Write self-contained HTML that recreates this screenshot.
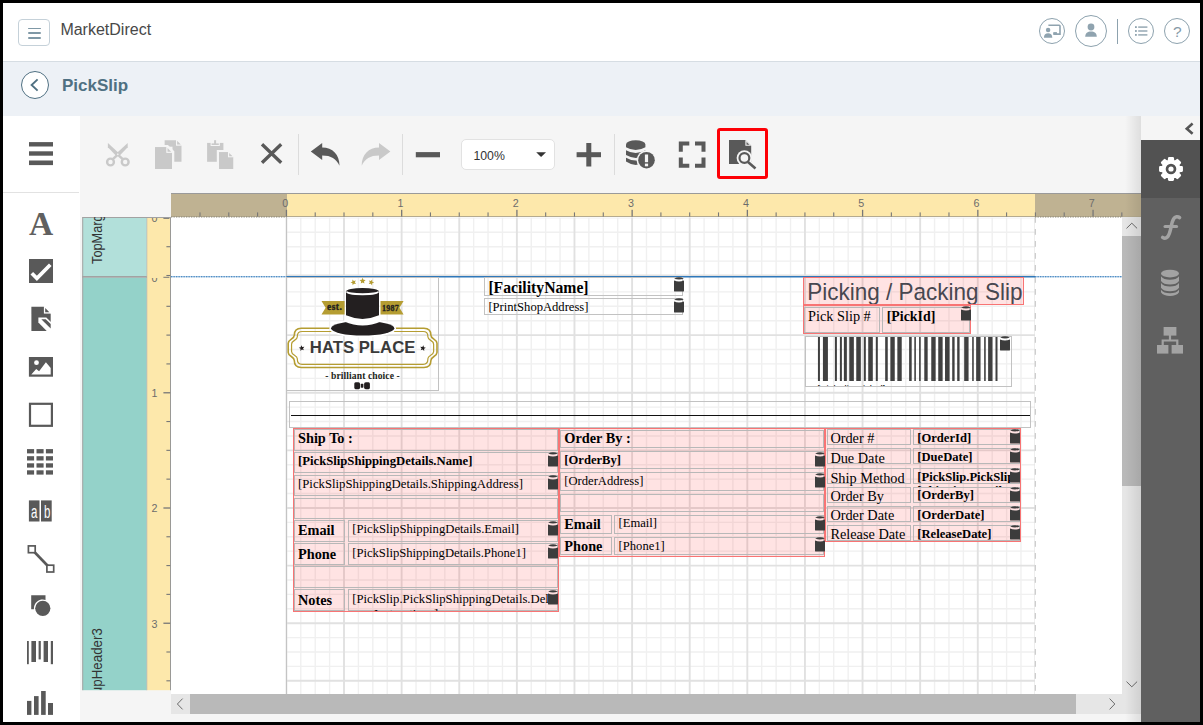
<!DOCTYPE html>
<html lang="en"><head><meta charset="utf-8"><title>PickSlip - MarketDirect</title>
<style>
html,body{margin:0;padding:0}
body{width:1203px;height:725px;background:#000;position:relative;overflow:hidden;font-family:"Liberation Sans",sans-serif;color:#333}
.a{position:absolute}
.sans{font-family:"Liberation Sans",sans-serif}
.serif{font-family:"Liberation Serif",serif;color:#000}
.t{position:absolute;white-space:nowrap;line-height:1}
svg{position:absolute;overflow:visible}
.cell{position:absolute;box-sizing:border-box;border:1px solid #b8b8b8;overflow:hidden}
.tbl{position:absolute;box-sizing:border-box;border:1.300px solid #f87474;background:rgba(255,40,40,0.130)}
.rn{position:absolute;font-size:10.700px;color:#6c6c6c;line-height:1;white-space:nowrap}
</style></head>
<body>
<div class="a" style="left:3px;top:3px;width:1197px;height:719px;background:#f5f5f5;"></div>
<div class="a" style="left:3px;top:3px;width:1197px;height:58px;background:#fff;"></div>
<div class="a" style="left:3px;top:61px;width:1197px;height:1px;background:#d6dde3;"></div>
<div class="a" style="left:3px;top:62px;width:1197px;height:54px;background:#edf1f6;"></div>
<div class="a" style="left:18px;top:19px;width:32px;height:27px;box-sizing:border-box;border:1px solid #c5d1d9;border-radius:4px;background:#fff"></div>
<div class="a" style="left:27.8px;top:27.8px;width:13px;height:1.6px;background:#7f98a6;border-radius:1px"></div>
<div class="a" style="left:27.8px;top:32.4px;width:13px;height:1.6px;background:#7f98a6;border-radius:1px"></div>
<div class="a" style="left:27.8px;top:37.2px;width:13px;height:1.6px;background:#7f98a6;border-radius:1px"></div>
<div class="t sans" style="left:60.4px;top:21.66px;font-size:16px;font-weight:normal;color:#484848;">MarketDirect</div>
<div class="a" style="left:1039px;top:18px;width:26px;height:26px;box-sizing:border-box;border:1.1px solid #8da2ae;border-radius:50%;background:#fff"></div>
<div class="a" style="left:1075px;top:15px;width:32px;height:32px;box-sizing:border-box;border:1.1px solid #8da2ae;border-radius:50%;background:#fff"></div>
<div class="a" style="left:1128px;top:18px;width:26px;height:26px;box-sizing:border-box;border:1.1px solid #8da2ae;border-radius:50%;background:#fff"></div>
<div class="a" style="left:1164px;top:18px;width:26px;height:26px;box-sizing:border-box;border:1.1px solid #8da2ae;border-radius:50%;background:#fff"></div>
<div class="a" style="left:1117px;top:18.5px;width:1.2px;height:25px;background:#8da2ae;"></div>
<svg style="left:1039px;top:18px" width="26" height="26" viewBox="0 0 26 26">
<path d="M9.400 7.300H20.200Q21 7.300 21 8.100V16.100H14.300" fill="none" stroke="#8fa3af" stroke-width="1.600"/>
<circle cx="9.100" cy="12.100" r="2.250" fill="#8fa3af"/>
<path d="M4.900 19.800c0-3.100 1.800-4.500 4.200-4.500s4.200 1.400 4.200 4.500z" fill="#8fa3af"/>
<rect x="14.300" y="14.100" width="3.600" height="2" fill="#8fa3af"/>
</svg>
<svg style="left:1075px;top:15px" width="32" height="32" viewBox="0 0 32 32">
<circle cx="16" cy="12" r="3.4" fill="#8fa3af"/>
<path d="M10.2 21.8c0-3.6 2.4-5.4 5.8-5.4s5.8 1.8 5.8 5.4z" fill="#8fa3af"/>
</svg>
<svg style="left:1128px;top:18px" width="26" height="26" viewBox="0 0 26 26" fill="#8fa3af">
<rect x="7" y="8.2" width="1.8" height="1.8"/><rect x="10.2" y="8.4" width="9.2" height="1.4"/>
<rect x="7" y="12.1" width="1.8" height="1.8"/><rect x="10.2" y="12.3" width="9.2" height="1.4"/>
<rect x="7" y="16" width="1.8" height="1.8"/><rect x="10.2" y="16.2" width="9.2" height="1.4"/>
</svg>
<div class="t sans" style="left:1172.9px;top:23.68px;font-size:15.5px;font-weight:normal;color:#8499a6;">?</div>
<div class="a" style="left:21px;top:70.5px;width:28px;height:28px;box-sizing:border-box;border:1.3px solid #4f7082;border-radius:50%;background:#fff"></div>
<svg style="left:21px;top:70.5px" width="28" height="28" viewBox="0 0 28 28"><path d="M16.6 8.4 10.6 14l6 5.6" fill="none" stroke="#4f7082" stroke-width="1.9"/></svg>
<div class="t sans" style="left:62px;top:77.01px;font-size:17px;font-weight:bold;color:#4f7082;">PickSlip</div>
<div class="a" style="left:3px;top:116px;width:76.7px;height:606px;background:#fff;"></div>
<div class="a" style="left:3px;top:191.9px;width:76.2px;height:1.3px;background:#e2e2e2;"></div>
<svg style="left:0;top:0" width="90" height="725" viewBox="0 0 90 725" fill="#595959">
<rect x="29" y="142.1" width="24" height="4.4"/><rect x="29" y="151.3" width="24" height="4.4"/><rect x="29" y="160.5" width="24" height="4.6"/>
<!-- checkbox -->
<rect x="29" y="259" width="24" height="24"/>
<path d="M31.800 273.200 36.900 278.400 50.300 264.800" fill="none" stroke="#fff" stroke-width="3.700"/>
<!-- rich text -->
<path d="M31.400 306.800H44.200L50.700 313.400V330.900H31.400z"/>
<path d="M43.900 306.300h7.300v7.300h-7.300z" fill="#fff"/><path d="M45.200 308.100v4.200h4.200z"/>
<path d="M38.400 317.500H46.300L51.200 322.300V331.400H47.200L38.400 322.600z" fill="#fff"/>
<path d="M41.300 319.200H45.700L50.700 324.100V328.600z"/>
<!-- picture -->
<rect x="28.900" y="357" width="24.100" height="19.700"/>
<circle cx="36.500" cy="362.700" r="2.400" fill="#fff"/>
<path d="M31.300 374.500 36.200 368.900 39.100 371.200 45.900 362.300 50.700 368.100V374.500z" fill="#fff"/>
<!-- rectangle -->
<rect x="30" y="403.800" width="21.900" height="22" fill="none" stroke="#595959" stroke-width="2.200"/>
<!-- line -->
<path d="M32 549.5 50.3 568.5" stroke="#595959" stroke-width="2.6" fill="none"/>
<rect x="28.4" y="545.9" width="6.8" height="6.8" fill="#fff" stroke="#595959" stroke-width="1.7"/>
<rect x="46.9" y="565.2" width="6.8" height="6.8" fill="#fff" stroke="#595959" stroke-width="1.7"/>
<!-- shape -->
<path d="M31.2 595.3h14.3v4.6a8.9 8.9 0 0 0-11.6 9.3h-2.7z"/>
<circle cx="42.8" cy="608.3" r="7.6"/>
<rect x="27.0" y="449.1" width="7.100" height="4.300"/><rect x="36.5" y="449.1" width="7.100" height="4.300"/><rect x="45.9" y="449.1" width="7.100" height="4.300"/><rect x="27.0" y="456.2" width="7.100" height="4.300"/><rect x="36.5" y="456.2" width="7.100" height="4.300"/><rect x="45.9" y="456.2" width="7.100" height="4.300"/><rect x="27.0" y="463.3" width="7.100" height="4.300"/><rect x="36.5" y="463.3" width="7.100" height="4.300"/><rect x="45.9" y="463.3" width="7.100" height="4.300"/><rect x="27.0" y="470.3" width="7.100" height="4.300"/><rect x="36.5" y="470.3" width="7.100" height="4.300"/><rect x="45.9" y="470.3" width="7.100" height="4.300"/>
<!-- ab -->
<rect x="28.900" y="500.400" width="10.600" height="21.100"/><rect x="41" y="500.400" width="10.700" height="21.100"/>
<rect x="27" y="641" width="1.80" height="23.20"/><rect x="31.4" y="641" width="4.60" height="21.00"/><rect x="38.6" y="641" width="2.20" height="18.40"/><rect x="43.6" y="641" width="4.40" height="21.00"/><rect x="50.8" y="641" width="2.20" height="23.20"/><rect x="27" y="700.9" width="4.40" height="14.00"/><rect x="34" y="696.1" width="4.60" height="18.80"/><rect x="41.1" y="691" width="4.60" height="23.90"/><rect x="48" y="703" width="5.00" height="11.90"/></svg>
<div class="t serif" style="left:28.9px;top:206.74px;font-size:33.5px;font-weight:bold;color:#606060;">A</div>
<div class="t sans" style="left:31.2px;top:502.76px;font-size:18px;font-weight:normal;color:#fff;transform-origin:0 0;transform:scaleX(0.640);">a</div>
<div class="t sans" style="left:43.6px;top:502.76px;font-size:18px;font-weight:normal;color:#fff;transform-origin:0 0;transform:scaleX(0.640);">b</div>
<svg style="left:0;top:0" width="1203" height="200" viewBox="0 0 1203 200">
<!-- scissors -->
<g fill="none" stroke="#c9c9c9" stroke-width="2.400"><circle cx="110.500" cy="162" r="3.400"/><circle cx="125.200" cy="162" r="3.400"/></g>
<path d="M107.900 143.100V147.200L116.300 155.900 119.300 153.400Z" fill="#c9c9c9"/>
<path d="M127.700 143.100V147.200L119.300 155.900 116.300 153.400Z" fill="#c9c9c9"/>
<path d="M117.800 154.600 123 159.400M117.800 154.600 112.600 159.400" stroke="#c9c9c9" stroke-width="2.500" fill="none"/>
<path d="M117.800 153.300l1 1-1 1-1-1z" fill="#f5f5f5"/>
<!-- copy -->
<path d="M164.600 140.200h11.900l5 5V161.800h-16.900z" fill="#c9c9c9"/>
<path d="M176 139.700h6v6h-6z" fill="#f5f5f5"/><path d="M177.100 140.800v3.700h3.700z" fill="#c9c9c9" transform="translate(0,0)"/>
<path d="M155 147.200h12l5 5V169h-17z" fill="#c9c9c9" stroke="#f5f5f5" stroke-width="4.600" paint-order="stroke"/>
<path d="M155 147.200h12l5 5V169h-17z" fill="#c9c9c9"/>
<path d="M166.300 146.700h6.200v6.200h-6.200z" fill="#f5f5f5"/><path d="M167.500 148v3.700h3.700z" fill="#c9c9c9"/>
<!-- paste -->
<path d="M207.100 142.900h16.300v18.900h-16.300z" fill="#c9c9c9"/>
<rect x="210.600" y="139.700" width="9.200" height="6.300" fill="#f5f5f5"/>
<rect x="214.100" y="140.200" width="2" height="4.400" fill="#c9c9c9"/><rect x="211.600" y="143.400" width="7.200" height="1.600" fill="#c9c9c9"/>
<path d="M219 152.200h9.700l4.400 4.400V169h-14.100z" fill="#c9c9c9" stroke="#f5f5f5" stroke-width="4.400" paint-order="stroke"/>
<path d="M219 152.200h9.700l4.400 4.400V169h-14.100z" fill="#c9c9c9"/>
<path d="M228 151.700h5.600v5.600h-5.600z" fill="#f5f5f5"/><path d="M229.200 152.900v3.300h3.300z" fill="#c9c9c9"/>
<!-- delete X -->
<path d="M262 144.2 281.2 162.8M281.2 144.2 262 162.8" stroke="#595959" stroke-width="3.3" fill="none"/>
<!-- separators -->
<rect x="298" y="134" width="1" height="41" fill="#dcdcdc"/><rect x="402" y="134" width="1" height="41" fill="#dcdcdc"/><rect x="614" y="134" width="1" height="41" fill="#dcdcdc"/>
<!-- undo / redo -->
<path d="M310.8 151.6 322.2 143v4.6c10.4 0 17.3 7 17.3 18.2-3.300-7-8.400-10.200-17.300-10.200v4.300z" fill="#595959"/>
<path d="M390.4 151.6 379 143v4.6c-10.400 0-17.300 7-17.300 18.200 3.300-7 8.400-10.200 17.300-10.200v4.300z" fill="#c9c9c9"/>
<!-- minus / plus -->
<rect x="415.8" y="152.1" width="24.2" height="5.2" fill="#595959"/>
<rect x="576.6" y="152.2" width="24.4" height="5" fill="#595959"/><rect x="586.3" y="143" width="5" height="23.5" fill="#595959"/>
<!-- database alert -->
<g fill="#595959">
<path d="M626 144.500a9.700 4.200 0 0 1 19.400 0V147.300q-9.700 5.600 -19.400 0z"/>
<path d="M626 150.200q9.700 5.600 19.400 0V155.100q-9.700 5.600 -19.400 0z"/>
<path d="M626 157.700q9.700 5.600 19.400 0V161.600q-9.700 6.600 -19.400 0z"/>
</g>
<circle cx="646.500" cy="160.200" r="9.900" fill="#f5f5f5"/><circle cx="646.500" cy="160.200" r="8.300" fill="#595959"/>
<rect x="644.900" y="154.500" width="3.200" height="7.700" fill="#f5f5f5"/><rect x="644.900" y="163.600" width="3.200" height="2.700" fill="#f5f5f5"/>
<!-- fit -->
<path d="M689.300 143.600h-8.500v8.200M695 143.600h8.500v8.200M689.300 165.800h-8.500v-8.200M695 165.800h8.500v-8.200" fill="none" stroke="#595959" stroke-width="4"/>
<!-- preview -->
<path d="M729 140h16.400l5.800 5.700V164H729z" fill="#595959"/>
<path d="M745.400 140v5.700h5.800z" fill="#f5f5f5"/><path d="M746.500 141.900l2.900 2.900h-2.900z" fill="#595959"/>
<circle cx="744.400" cy="158" r="7.800" fill="#f5f5f5"/>
<path d="M748 162 753 166.300" stroke="#f5f5f5" stroke-width="5" fill="none"/>
<circle cx="744.400" cy="158" r="4.900" fill="none" stroke="#595959" stroke-width="2.200"/>
<path d="M748 162 755.500 168.400" stroke="#595959" stroke-width="2.600" fill="none"/>
<!-- caret -->
<path d="M536.200 152.200h9.800l-4.900 4.900z" fill="#333"/>
</svg>
<div class="a" style="left:460.7px;top:138.6px;width:94.7px;height:31px;box-sizing:border-box;border:1px solid #e2e2e2;border-radius:5px;background:#fff;z-index:-0"></div>
<div class="t sans" style="left:473.4px;top:149.69px;font-size:12.3px;font-weight:normal;color:#333;">100%</div>
<svg style="left:0;top:0" width="1203" height="200" viewBox="0 0 1203 200"><path d="M536.200 152.200h9.800l-4.900 4.900z" fill="#333"/></svg>
<div class="a" style="left:717.300px;top:128.200px;width:50.300px;height:50.900px;box-sizing:border-box;border:3.500px solid #fd0006;border-radius:3px"></div>
<div class="a" style="left:1141px;top:116px;width:59px;height:606px;background:#606060;"></div>
<div class="a" style="left:1141px;top:116px;width:59px;height:24.2px;background:#f5f5f5;"></div>
<div class="a" style="left:1141px;top:140.2px;width:59px;height:57.4px;background:#525252;"></div>
<svg style="left:0;top:0" width="1203" height="400" viewBox="0 0 1203 400">
<path d="M1192.600 123.600 1186.800 128.700 1192.600 133.800" fill="none" stroke="#555" stroke-width="2.600"/>
<path d="M1168.95 160.96 L1169.16 158.26 L1172.84 158.26 L1173.05 160.96 L1175.23 161.86 L1177.29 160.10 L1179.90 162.71 L1178.14 164.77 L1179.04 166.95 L1181.74 167.16 L1181.74 170.84 L1179.04 171.05 L1178.14 173.23 L1179.90 175.29 L1177.29 177.90 L1175.23 176.14 L1173.05 177.04 L1172.84 179.74 L1169.16 179.74 L1168.95 177.04 L1166.77 176.14 L1164.71 177.90 L1162.10 175.29 L1163.86 173.23 L1162.96 171.05 L1160.26 170.84 L1160.26 167.16 L1162.96 166.95 L1163.86 164.77 L1162.10 162.71 L1164.71 160.10 L1166.77 161.86Z" fill="#fff" stroke="#fff" stroke-width="2.400" stroke-linejoin="round"/>
<circle cx="1171" cy="169" r="5.300" fill="#525252"/><circle cx="1171" cy="169" r="2.600" fill="#fff"/>
<path d="M1179.600 217.600c-1.600-1.400-4.600-1.200-6 1.200-1.400 2.300-2 5.600-2.600 8.600 M1171 227.400c-.8 4-1.600 7.600-3.600 9.600-1.400 1.400-3.400 1.400-4.800.4" fill="none" stroke="#a3a3a3" stroke-width="3.500" stroke-linecap="round"/>
<path d="M1165 226.600h11.600" stroke="#a3a3a3" stroke-width="3" stroke-linecap="round"/>
<!-- db -->
<g fill="#a3a3a3">
<ellipse cx="1170" cy="273.600" rx="9" ry="3.900"/>
<path d="M1161 276.300c1.400 2.400 5 3.500 9 3.500s7.600-1.100 9-3.500v4.700c-1.400 2.400-5 3.500-9 3.500s-7.600-1.100-9-3.500z"/>
<path d="M1161 283c1.400 2.400 5 3.500 9 3.500s7.600-1.100 9-3.500v4.700c-1.400 2.400-5 3.500-9 3.500s-7.600-1.100-9-3.500z"/>
<path d="M1161 289.700c1.400 2.400 5 3.500 9 3.500s7.600-1.100 9-3.500v2.600c-1.400 2.600-5 3.700-9 3.700s-7.600-1.100-9-3.700z"/>
</g>
<!-- tree -->
<g fill="#a3a3a3"><rect x="1163.600" y="327" width="12.800" height="8.600"/><rect x="1157" y="345" width="11.400" height="8.600"/><rect x="1171.600" y="345" width="11.400" height="8.600"/></g>
<path d="M1170 335v5M1162.700 345.500v-5h14.600v5" fill="none" stroke="#a3a3a3" stroke-width="2.200"/>
</svg>
<div class="a" style="left:171px;top:193px;width:970px;height:23.6px;background:#bfb292;"></div>
<div class="a" style="left:287.0px;top:193px;width:748.0px;height:23.6px;background:#fde8ab;"></div>
<div class="a" style="left:171px;top:192.6px;width:970px;height:1px;background:#9a9a9a;"></div>
<div class="a" style="left:171px;top:216.2px;width:970px;height:0.9px;background:#b5ab8f;"></div>
<svg style="left:0;top:0" width="1203" height="725" viewBox="0 0 1203 725">
<rect x="199.43" y="212.4" width="1.1" height="4.2" fill="#777"/>
<rect x="228.23" y="212.4" width="1.1" height="4.2" fill="#777"/>
<rect x="257.04" y="212.4" width="1.1" height="4.2" fill="#777"/>
<rect x="285.80" y="209.8" width="1.3" height="6.8" fill="#777"/>
<rect x="314.66" y="212.4" width="1.1" height="4.2" fill="#777"/>
<rect x="343.46" y="212.4" width="1.1" height="4.2" fill="#777"/>
<rect x="372.27" y="212.4" width="1.1" height="4.2" fill="#777"/>
<rect x="401.03" y="209.8" width="1.3" height="6.8" fill="#777"/>
<rect x="429.89" y="212.4" width="1.1" height="4.2" fill="#777"/>
<rect x="458.69" y="212.4" width="1.1" height="4.2" fill="#777"/>
<rect x="487.50" y="212.4" width="1.1" height="4.2" fill="#777"/>
<rect x="516.26" y="209.8" width="1.3" height="6.8" fill="#777"/>
<rect x="545.12" y="212.4" width="1.1" height="4.2" fill="#777"/>
<rect x="573.92" y="212.4" width="1.1" height="4.2" fill="#777"/>
<rect x="602.73" y="212.4" width="1.1" height="4.2" fill="#777"/>
<rect x="631.49" y="209.8" width="1.3" height="6.8" fill="#777"/>
<rect x="660.35" y="212.4" width="1.1" height="4.2" fill="#777"/>
<rect x="689.15" y="212.4" width="1.1" height="4.2" fill="#777"/>
<rect x="717.96" y="212.4" width="1.1" height="4.2" fill="#777"/>
<rect x="746.72" y="209.8" width="1.3" height="6.8" fill="#777"/>
<rect x="775.58" y="212.4" width="1.1" height="4.2" fill="#777"/>
<rect x="804.38" y="212.4" width="1.1" height="4.2" fill="#777"/>
<rect x="833.19" y="212.4" width="1.1" height="4.2" fill="#777"/>
<rect x="861.95" y="209.8" width="1.3" height="6.8" fill="#777"/>
<rect x="890.81" y="212.4" width="1.1" height="4.2" fill="#777"/>
<rect x="919.62" y="212.4" width="1.1" height="4.2" fill="#777"/>
<rect x="948.42" y="212.4" width="1.1" height="4.2" fill="#777"/>
<rect x="977.18" y="209.8" width="1.3" height="6.8" fill="#777"/>
<rect x="1006.04" y="212.4" width="1.1" height="4.2" fill="#777"/>
<rect x="1034.85" y="212.4" width="1.1" height="4.2" fill="#777"/>
<rect x="1063.65" y="212.4" width="1.1" height="4.2" fill="#777"/>
<rect x="1092.41" y="209.8" width="1.3" height="6.8" fill="#777"/>
<rect x="1121.27" y="212.4" width="1.1" height="4.2" fill="#777"/>
<rect x="146.8" y="217.4" width="23.6" height="472.8" fill="#fde8ab"/>
<rect x="170.1" y="217.4" width="1" height="472.8" fill="#8f8f8f"/>
<rect x="146.3" y="217.4" width="0.9" height="472.8" fill="#a9a9a9"/>
<rect x="82.6" y="217.4" width="63.8" height="59" fill="#b2e0da"/>
<rect x="82.6" y="277.6" width="63.8" height="412.600" fill="#94d2c9"/>
<rect x="82.200" y="217.400" width="1" height="472.800" fill="#a2a2a2"/>
<rect x="82.200" y="217" width="88.600" height="1" fill="#a2a2a2"/>
<rect x="82.200" y="276" width="64.600" height="1.700" fill="#a2a2a2"/>
<rect x="166.4" y="246.16" width="3.8" height="1.1" fill="#777"/>
<rect x="166.4" y="274.96" width="3.8" height="1.1" fill="#777"/>
<rect x="166.4" y="305.76" width="3.8" height="1.1" fill="#777"/>
<rect x="166.4" y="334.56" width="3.8" height="1.1" fill="#777"/>
<rect x="166.4" y="363.37" width="3.8" height="1.1" fill="#777"/>
<rect x="163.4" y="392.13" width="6.8" height="1.3" fill="#777"/>
<rect x="166.4" y="420.99" width="3.8" height="1.1" fill="#777"/>
<rect x="166.4" y="449.80" width="3.8" height="1.1" fill="#777"/>
<rect x="166.4" y="478.60" width="3.8" height="1.1" fill="#777"/>
<rect x="163.4" y="507.36" width="6.8" height="1.3" fill="#777"/>
<rect x="166.4" y="536.22" width="3.8" height="1.1" fill="#777"/>
<rect x="166.4" y="565.03" width="3.8" height="1.1" fill="#777"/>
<rect x="166.4" y="593.83" width="3.8" height="1.1" fill="#777"/>
<rect x="163.4" y="622.59" width="6.8" height="1.3" fill="#777"/>
<rect x="166.4" y="651.45" width="3.8" height="1.1" fill="#777"/>
<rect x="166.4" y="680.26" width="3.8" height="1.1" fill="#777"/>
<path d="M163.400 218.400h6" fill="none" stroke="#777" stroke-width="1"/>
<path d="M163.400 277.300h6" fill="none" stroke="#777" stroke-width="1"/>
</svg>
<div class="rn" style="left:275.2px;top:197.700px;width:20px;text-align:center">0</div>
<div class="rn" style="left:390.4px;top:197.700px;width:20px;text-align:center">1</div>
<div class="rn" style="left:505.7px;top:197.700px;width:20px;text-align:center">2</div>
<div class="rn" style="left:620.9px;top:197.700px;width:20px;text-align:center">3</div>
<div class="rn" style="left:736.1px;top:197.700px;width:20px;text-align:center">4</div>
<div class="rn" style="left:851.3px;top:197.700px;width:20px;text-align:center">5</div>
<div class="rn" style="left:966.6px;top:197.700px;width:20px;text-align:center">6</div>
<div class="rn" style="left:1081.8px;top:197.700px;width:20px;text-align:center">7</div>
<div class="rn" style="left:147.600px;top:388.0px;width:14px;text-align:center">1</div>
<div class="rn" style="left:147.600px;top:503.3px;width:14px;text-align:center">2</div>
<div class="rn" style="left:147.600px;top:618.5px;width:14px;text-align:center">3</div>
<div class="a" style="left:147px;top:217.600px;width:16px;height:8px;overflow:hidden"><div class="rn" style="left:0.600px;top:-4.900px;width:14px;text-align:center">0</div></div>
<div class="a" style="left:147px;top:277.800px;width:16px;height:8px;overflow:hidden"><div class="rn" style="left:0.600px;top:-4.900px;width:14px;text-align:center">0</div></div>
<div class="a" style="left:82.600px;top:217.400px;width:63.800px;height:58.600px;overflow:hidden"><div class="t" style="left:0;top:0;font-size:14.200px;color:#333;transform-origin:0 0;transform:translate(6.700px,47px) rotate(-90deg) scaleX(0.900)">TopMargin</div></div>
<div class="a" style="left:82.600px;top:277.600px;width:63.800px;height:412.600px;overflow:hidden"><div class="t" style="left:0;top:0;font-size:14.200px;color:#333;transform-origin:0 0;transform:translate(7.100px,438.400px) rotate(-90deg) scaleX(0.940)">GroupHeader3</div></div>
<div class="a" id="canvas" style="left:171px;top:217.4px;width:951.4000000000001px;height:476.80000000000007px;background:#fff;overflow:hidden"></div>
<svg style="left:0;top:0" width="1203" height="725" viewBox="0 0 1203 725">
<clipPath id="cp"><rect x="286.4" y="217.4" width="748.6" height="476.80000000000007"/></clipPath><g clip-path="url(#cp)">
<path d="M300.80 217V694.2M315.21 217V694.2M329.61 217V694.2M358.42 217V694.2M372.82 217V694.2M387.23 217V694.2M416.03 217V694.2M430.44 217V694.2M444.84 217V694.2M473.65 217V694.2M488.05 217V694.2M502.46 217V694.2M531.26 217V694.2M545.67 217V694.2M560.07 217V694.2M588.88 217V694.2M603.28 217V694.2M617.69 217V694.2M646.49 217V694.2M660.90 217V694.2M675.30 217V694.2M704.11 217V694.2M718.51 217V694.2M732.92 217V694.2M761.72 217V694.2M776.13 217V694.2M790.53 217V694.2M819.34 217V694.2M833.74 217V694.2M848.15 217V694.2M876.95 217V694.2M891.36 217V694.2M905.76 217V694.2M934.57 217V694.2M948.97 217V694.2M963.38 217V694.2M992.18 217V694.2M1006.59 217V694.2M1020.99 217V694.2M286.4 217.90H1035.0M286.4 232.30H1035.0M286.4 246.71H1035.0M286.4 261.11H1035.0M286.4 291.90H1035.0M286.4 306.31H1035.0M286.4 320.71H1035.0M286.4 349.52H1035.0M286.4 363.92H1035.0M286.4 378.33H1035.0M286.4 407.13H1035.0M286.4 421.54H1035.0M286.4 435.94H1035.0M286.4 464.75H1035.0M286.4 479.15H1035.0M286.4 493.56H1035.0M286.4 522.36H1035.0M286.4 536.77H1035.0M286.4 551.17H1035.0M286.4 579.98H1035.0M286.4 594.38H1035.0M286.4 608.79H1035.0M286.4 637.59H1035.0M286.4 652.00H1035.0M286.4 666.40H1035.0" stroke="#f0f0f0" stroke-width="1.400" fill="none"/>
<path d="M286.40 217V694.2M344.01 217V694.2M401.63 217V694.2M459.25 217V694.2M516.86 217V694.2M574.47 217V694.2M632.09 217V694.2M689.70 217V694.2M747.32 217V694.2M804.93 217V694.2M862.55 217V694.2M920.16 217V694.2M977.78 217V694.2M1035.39 217V694.2M286.4 275.51H1035.0M286.4 335.12H1035.0M286.4 392.73H1035.0M286.4 450.35H1035.0M286.4 507.96H1035.0M286.4 565.58H1035.0M286.4 623.19H1035.0M286.4 680.81H1035.0" stroke="#e1e1e1" stroke-width="1.900" fill="none"/>
</g>
<path d="M286.4 217V694.2" stroke="#c4c4c4" stroke-width="1.200"/>
<path d="M1035.3 217.4V694.2" stroke="#c2c2c2" stroke-width="1" stroke-dasharray="5.800 6.200" stroke-dashoffset="0.400"/>
<path d="M171 217H286.4M1035.0 217H1122.400" stroke="#8c8676" stroke-width="1.100" stroke-dasharray="1.300 1.200"/>
<path d="M286.4 276.700H1035.0" stroke="#2f78ba" stroke-width="1.500"/>
<path d="M171 276.700H286.4M1035.0 276.700H1122.400" stroke="#9dc0e0" stroke-width="1.100"/>
<path d="M171 276.700H286.4M1035.0 276.700H1122.400" stroke="#2f78ba" stroke-width="1.100" stroke-dasharray="1.300 1.200"/>
</svg>
<div class="a" style="left:1122.4px;top:217.4px;width:18.6px;height:476.8px;background:#e6e6e6;"></div>
<div class="a" style="left:1122.4px;top:236px;width:18.6px;height:250px;background:#b9b9b9;"></div>
<div class="a" style="left:171px;top:694.2px;width:951.4px;height:19.6px;background:#e6e6e6;"></div>
<div class="a" style="left:189.7px;top:694.2px;width:886.3px;height:19.6px;background:#b9b9b9;"></div>
<div class="a" style="left:1122.4px;top:694.2px;width:18.6px;height:19.6px;background:#e6e6e6;"></div>
<svg style="left:0;top:0" width="1203" height="725" viewBox="0 0 1203 725" fill="none" stroke="#6a6a6a" stroke-width="1">
<path d="M1126.500 228.400 1131.800 223.200 1137.100 228.400"/><path d="M1126.500 681.600 1131.800 686.800 1137.100 681.600"/>
<path d="M182.600 698.600 177.400 704 182.600 709.400"/><path d="M1109.600 698.600 1114.800 704 1109.600 709.400"/>
</svg>
<div class="a" style="left:1125px;top:116px;width:16px;height:606px;background:linear-gradient(to right,rgba(0,0,0,0),rgba(0,0,0,0.095))"></div>
<div class="cell" style="left:286.4px;top:277px;width:152.4px;height:113.6px;border-color:#c2c2c2;"></div>
<div class="cell" style="left:484.4px;top:276.6px;width:198.2px;height:19.0px;border-color:#c2c2c2;"></div>
<div class="t serif" style="left:488.4px;top:279.85px;font-size:15.7px;font-weight:bold;">[FacilityName]</div>
<svg style="left:673.5px;top:277.4px" width="10" height="14.6" viewBox="0 0 10 14.6"><path d="M0 3.500Q5 5.600 10 3.500V13.700Q10 14.600 9.100 14.600H.900Q0 14.600 0 13.700Z" fill="#3c3c3c"/><path d="M.200 1.400Q5 -.900 9.800 1.400Q5 3.700 .200 1.400Z" fill="#3c3c3c"/></svg>
<div class="cell" style="left:484.4px;top:298.4px;width:198.2px;height:16.8px;border-color:#c2c2c2;"></div>
<div class="t serif" style="left:488.4px;top:300.75px;font-size:12.6px;font-weight:normal;">[PrintShopAddress]</div>
<svg style="left:673.5px;top:298.4px" width="10" height="14.6" viewBox="0 0 10 14.6"><path d="M0 3.500Q5 5.600 10 3.500V13.700Q10 14.600 9.100 14.600H.900Q0 14.600 0 13.700Z" fill="#3c3c3c"/><path d="M.200 1.400Q5 -.900 9.800 1.400Q5 3.700 .200 1.400Z" fill="#3c3c3c"/></svg>
<div class="tbl" style="left:803.200px;top:277.400px;width:220.600px;height:27.800px"></div>
<div class="a" style="left:804px;top:278px;width:219px;height:25.800px;overflow:hidden"><div class="t sans" style="left:3.300px;top:4.250px;font-size:22.500px;color:#474750;transform-origin:0 19.050px;transform:scaleY(1.060)">Picking / Packing Slip</div></div>
<div class="tbl" style="left:803.200px;top:305.300px;width:167.800px;height:28.400px"></div>
<div class="cell" style="left:804.4px;top:306.5px;width:75.5px;height:26.0px;border-color:#b8b8b8;"></div>
<div class="cell" style="left:882.2px;top:306.5px;width:87.6px;height:26.0px;border-color:#b8b8b8;"></div>
<div class="t serif" style="left:808px;top:308.92px;font-size:14.3px;font-weight:normal;">Pick Slip #</div>
<div class="t serif" style="left:886.7px;top:310.26px;font-size:13.9px;font-weight:bold;">[PickId]</div>
<svg style="left:960.6px;top:306.3px" width="10" height="14.6" viewBox="0 0 10 14.6"><path d="M0 3.500Q5 5.600 10 3.500V13.700Q10 14.600 9.100 14.600H.900Q0 14.600 0 13.700Z" fill="#3c3c3c"/><path d="M.200 1.400Q5 -.900 9.800 1.400Q5 3.700 .200 1.400Z" fill="#3c3c3c"/></svg>
<div class="cell" style="left:804.6px;top:336px;width:207.6px;height:50.6px;border-color:#c2c2c2;"></div>
<svg style="left:0;top:0" width="1203" height="725" viewBox="0 0 1203 725" fill="#404040"><rect x="817.94" y="337" width="2.00" height="44"/><rect x="822.93" y="337" width="4.99" height="44"/><rect x="834.90" y="337" width="2.00" height="44"/><rect x="839.89" y="337" width="2.00" height="44"/><rect x="843.88" y="337" width="2.99" height="44"/><rect x="849.26" y="337" width="4.59" height="44"/><rect x="856.25" y="337" width="4.59" height="44"/><rect x="863.83" y="337" width="2.00" height="44"/><rect x="868.22" y="337" width="4.59" height="44"/><rect x="875.80" y="337" width="2.00" height="44"/><rect x="885.17" y="337" width="2.59" height="44"/><rect x="890.36" y="337" width="4.39" height="44"/><rect x="897.34" y="337" width="4.39" height="44"/><rect x="909.11" y="337" width="2.59" height="44"/><rect x="914.30" y="337" width="1.60" height="44"/><rect x="919.09" y="337" width="1.60" height="44"/><rect x="924.28" y="337" width="3.39" height="44"/><rect x="931.26" y="337" width="4.39" height="44"/><rect x="938.24" y="337" width="4.39" height="44"/><rect x="945.02" y="337" width="4.59" height="44"/><rect x="952.21" y="337" width="2.39" height="44"/><rect x="957.19" y="337" width="2.39" height="44"/><rect x="964.18" y="337" width="4.39" height="44"/><rect x="972.16" y="337" width="1.60" height="44"/><rect x="976.15" y="337" width="4.39" height="44"/><rect x="984.13" y="337" width="1.60" height="44"/><rect x="988.12" y="337" width="4.39" height="44"/><rect x="995.50" y="337" width="2.00" height="44"/></svg>
<div class="a" style="left:806px;top:381px;width:204.0px;height:5.3px;overflow:hidden"><div class="t sans" style="left:11.6px;top:3.06px;font-size:9.5px;font-weight:normal;color:#000;white-space:nowrap;line-height:1.120;width:192.4px">[PickSlip.PickId]</div></div>
<svg style="left:999.5px;top:336.4px" width="10" height="14.6" viewBox="0 0 10 14.6"><path d="M0 3.500Q5 5.600 10 3.500V13.700Q10 14.600 9.100 14.600H.900Q0 14.600 0 13.700Z" fill="#3c3c3c"/><path d="M.200 1.400Q5 -.900 9.800 1.400Q5 3.700 .200 1.400Z" fill="#3c3c3c"/></svg>
<div class="cell" style="left:289.4px;top:401px;width:741.2px;height:27.2px;border-color:#c2c2c2;"></div>
<div class="a" style="left:291px;top:414.9px;width:738.8px;height:1.3px;background:#111;"></div>
<div class="tbl" style="left:292.700px;top:427.800px;width:266.700px;height:184.200px"></div>
<div class="cell" style="left:294.4px;top:429.2px;width:263.7px;height:21.4px;border-color:#b8b8b8;"></div>
<div class="cell" style="left:294.4px;top:451.6px;width:263.7px;height:21.4px;border-color:#b8b8b8;"></div>
<div class="cell" style="left:294.4px;top:474.55px;width:263.7px;height:21.4px;border-color:#b8b8b8;"></div>
<div class="cell" style="left:294.4px;top:497.5px;width:263.7px;height:21.4px;border-color:#b8b8b8;"></div>
<div class="cell" style="left:294.4px;top:520.45px;width:50.6px;height:21.4px;border-color:#b8b8b8;"></div>
<div class="cell" style="left:348.3px;top:520.45px;width:209.8px;height:21.4px;border-color:#b8b8b8;"></div>
<div class="cell" style="left:294.4px;top:543.4px;width:50.6px;height:21.4px;border-color:#b8b8b8;"></div>
<div class="cell" style="left:348.3px;top:543.4px;width:209.8px;height:21.4px;border-color:#b8b8b8;"></div>
<div class="cell" style="left:294.4px;top:566.35px;width:263.7px;height:21.4px;border-color:#b8b8b8;"></div>
<div class="cell" style="left:294.4px;top:589.3px;width:50.6px;height:21.4px;border-color:#b8b8b8;"></div>
<div class="cell" style="left:348.3px;top:589.3px;width:209.8px;height:21.4px;border-color:#b8b8b8;"></div>
<div class="t serif" style="left:298px;top:431.22px;font-size:14.3px;font-weight:bold;">Ship To :</div>
<div class="t serif" style="left:298px;top:455.36px;font-size:12.7px;font-weight:bold;">[PickSlipShippingDetails.Name]</div>
<div class="t serif" style="left:298px;top:478.02px;font-size:12.75px;font-weight:normal;">[PickSlipShippingDetails.ShippingAddress]</div>
<div class="t serif" style="left:298px;top:523.42px;font-size:14.3px;font-weight:bold;">Email</div>
<div class="t serif" style="left:352.2px;top:523.16px;font-size:12.7px;font-weight:normal;">[PickSlipShippingDetails.Email]</div>
<div class="t serif" style="left:298px;top:546.62px;font-size:14.3px;font-weight:bold;">Phone</div>
<div class="t serif" style="left:352.2px;top:546.81px;font-size:12.65px;font-weight:normal;">[PickSlipShippingDetails.Phone1]</div>
<div class="t serif" style="left:298px;top:593.02px;font-size:14.3px;font-weight:bold;">Notes</div>
<div class="a" style="left:349.3px;top:590.6px;width:207.9px;height:19.8px;overflow:hidden"><div class="t serif" style="left:2.9px;top:1.56px;font-size:12.7px;font-weight:normal;white-space:nowrap;line-height:1.120;width:205.0px">[PickSlip.PickSlipShippingDetails.DeliveryInstructions]</div></div>
<div class="a" style="left:349.3px;top:604px;width:207.1px;height:6.6px;overflow:hidden"><div class="t serif" style="left:24.7px;top:2.56px;font-size:12.7px;font-weight:normal;white-space:nowrap;line-height:1.120;width:182.4px">Instructions]</div></div>
<svg style="left:548.1px;top:452.4px" width="10" height="14.6" viewBox="0 0 10 14.6"><path d="M0 3.500Q5 5.600 10 3.500V13.700Q10 14.600 9.100 14.600H.900Q0 14.600 0 13.700Z" fill="#3c3c3c"/><path d="M.200 1.400Q5 -.900 9.800 1.400Q5 3.700 .200 1.400Z" fill="#3c3c3c"/></svg>
<svg style="left:548.1px;top:474.8px" width="10" height="14.6" viewBox="0 0 10 14.6"><path d="M0 3.500Q5 5.600 10 3.500V13.700Q10 14.600 9.100 14.600H.900Q0 14.600 0 13.700Z" fill="#3c3c3c"/><path d="M.200 1.400Q5 -.900 9.800 1.400Q5 3.700 .200 1.400Z" fill="#3c3c3c"/></svg>
<svg style="left:548.1px;top:521.4px" width="10" height="14.6" viewBox="0 0 10 14.6"><path d="M0 3.500Q5 5.600 10 3.500V13.700Q10 14.600 9.100 14.600H.900Q0 14.600 0 13.700Z" fill="#3c3c3c"/><path d="M.200 1.400Q5 -.900 9.800 1.400Q5 3.700 .200 1.400Z" fill="#3c3c3c"/></svg>
<svg style="left:548.1px;top:544px" width="10" height="14.6" viewBox="0 0 10 14.6"><path d="M0 3.500Q5 5.600 10 3.500V13.700Q10 14.600 9.100 14.600H.900Q0 14.600 0 13.700Z" fill="#3c3c3c"/><path d="M.200 1.400Q5 -.900 9.800 1.400Q5 3.700 .200 1.400Z" fill="#3c3c3c"/></svg>
<svg style="left:548.1px;top:590.4px" width="10" height="14.6" viewBox="0 0 10 14.6"><path d="M0 3.500Q5 5.600 10 3.500V13.700Q10 14.600 9.100 14.600H.900Q0 14.600 0 13.700Z" fill="#3c3c3c"/><path d="M.200 1.400Q5 -.900 9.800 1.400Q5 3.700 .200 1.400Z" fill="#3c3c3c"/></svg>
<div class="tbl" style="left:558.900px;top:427.800px;width:266.500px;height:129.200px"></div>
<div class="cell" style="left:560.4px;top:429.6px;width:263.5px;height:18.4px;border-color:#b8b8b8;"></div>
<div class="cell" style="left:560.4px;top:451px;width:263.5px;height:18.4px;border-color:#b8b8b8;"></div>
<div class="cell" style="left:560.4px;top:472.4px;width:263.5px;height:18.4px;border-color:#b8b8b8;"></div>
<div class="cell" style="left:560.4px;top:494px;width:263.5px;height:18.4px;border-color:#b8b8b8;"></div>
<div class="cell" style="left:560.4px;top:515.4px;width:51.3px;height:18.4px;border-color:#b8b8b8;"></div>
<div class="cell" style="left:614.2px;top:515.4px;width:209.7px;height:18.4px;border-color:#b8b8b8;"></div>
<div class="cell" style="left:560.4px;top:537.1px;width:51.3px;height:18.4px;border-color:#b8b8b8;"></div>
<div class="cell" style="left:614.2px;top:537.1px;width:209.7px;height:18.4px;border-color:#b8b8b8;"></div>
<div class="t serif" style="left:564.3px;top:430.72px;font-size:14.3px;font-weight:bold;">Order By :</div>
<div class="t serif" style="left:564.3px;top:453.65px;font-size:12.6px;font-weight:bold;">[OrderBy]</div>
<div class="t serif" style="left:564.3px;top:475.15px;font-size:12.6px;font-weight:normal;">[OrderAddress]</div>
<div class="t serif" style="left:564.3px;top:517.22px;font-size:14.3px;font-weight:bold;">Email</div>
<div class="t serif" style="left:618.6px;top:517.05px;font-size:12.6px;font-weight:normal;">[Email]</div>
<div class="t serif" style="left:564.3px;top:538.52px;font-size:14.3px;font-weight:bold;">Phone</div>
<div class="t serif" style="left:618.6px;top:539.85px;font-size:12.6px;font-weight:normal;">[Phone1]</div>
<svg style="left:814.6px;top:451.6px" width="10" height="14.6" viewBox="0 0 10 14.6"><path d="M0 3.500Q5 5.600 10 3.500V13.700Q10 14.600 9.100 14.600H.900Q0 14.600 0 13.700Z" fill="#3c3c3c"/><path d="M.200 1.400Q5 -.900 9.800 1.400Q5 3.700 .200 1.400Z" fill="#3c3c3c"/></svg>
<svg style="left:814.6px;top:472.8px" width="10" height="14.6" viewBox="0 0 10 14.6"><path d="M0 3.500Q5 5.600 10 3.500V13.700Q10 14.600 9.100 14.600H.900Q0 14.600 0 13.700Z" fill="#3c3c3c"/><path d="M.200 1.400Q5 -.900 9.800 1.400Q5 3.700 .200 1.400Z" fill="#3c3c3c"/></svg>
<svg style="left:814.6px;top:515.8px" width="10" height="14.6" viewBox="0 0 10 14.6"><path d="M0 3.500Q5 5.600 10 3.500V13.700Q10 14.600 9.100 14.600H.900Q0 14.600 0 13.700Z" fill="#3c3c3c"/><path d="M.200 1.400Q5 -.900 9.800 1.400Q5 3.700 .200 1.400Z" fill="#3c3c3c"/></svg>
<svg style="left:814.6px;top:537.4px" width="10" height="14.6" viewBox="0 0 10 14.6"><path d="M0 3.500Q5 5.600 10 3.500V13.700Q10 14.600 9.100 14.600H.900Q0 14.600 0 13.700Z" fill="#3c3c3c"/><path d="M.200 1.400Q5 -.900 9.800 1.400Q5 3.700 .200 1.400Z" fill="#3c3c3c"/></svg>
<div class="tbl" style="left:825px;top:427.800px;width:196.300px;height:114.600px"></div>
<div class="cell" style="left:826.9px;top:428.9px;width:83.7px;height:16.1px;border-color:#b8b8b8;"></div>
<div class="cell" style="left:913.2px;top:428.9px;width:106.7px;height:16.1px;border-color:#b8b8b8;"></div>
<div class="a" style="left:826.9px;top:426.9px;width:83.7px;height:21.0px;overflow:hidden"><div class="t serif" style="left:3.5px;top:3.22px;font-size:14.3px;font-weight:normal;white-space:nowrap;line-height:1.120;width:80.2px">Order #</div></div>
<div class="a" style="left:913.2px;top:427.9px;width:106.7px;height:20.0px;overflow:hidden"><div class="t serif" style="left:4.1px;top:3.15px;font-size:12.6px;font-weight:bold;white-space:nowrap;line-height:1.120;width:102.6px">[OrderId]</div></div>
<svg style="left:1010.1px;top:428.9px" width="10" height="14.6" viewBox="0 0 10 14.6"><path d="M0 3.500Q5 5.600 10 3.500V13.700Q10 14.600 9.100 14.600H.900Q0 14.600 0 13.700Z" fill="#3c3c3c"/><path d="M.200 1.400Q5 -.900 9.800 1.400Q5 3.700 .200 1.400Z" fill="#3c3c3c"/></svg>
<div class="cell" style="left:826.9px;top:448.3px;width:83.7px;height:16.1px;border-color:#b8b8b8;"></div>
<div class="cell" style="left:913.2px;top:448.3px;width:106.7px;height:16.1px;border-color:#b8b8b8;"></div>
<div class="a" style="left:826.9px;top:446.3px;width:83.7px;height:21.0px;overflow:hidden"><div class="t serif" style="left:3.5px;top:4.12px;font-size:14.3px;font-weight:normal;white-space:nowrap;line-height:1.120;width:80.2px">Due Date</div></div>
<div class="a" style="left:913.2px;top:447.3px;width:106.7px;height:20.0px;overflow:hidden"><div class="t serif" style="left:4.1px;top:2.85px;font-size:12.6px;font-weight:bold;white-space:nowrap;line-height:1.120;width:102.6px">[DueDate]</div></div>
<svg style="left:1010.1px;top:448.3px" width="10" height="14.6" viewBox="0 0 10 14.6"><path d="M0 3.500Q5 5.600 10 3.500V13.700Q10 14.600 9.100 14.600H.900Q0 14.600 0 13.700Z" fill="#3c3c3c"/><path d="M.200 1.400Q5 -.900 9.800 1.400Q5 3.700 .200 1.400Z" fill="#3c3c3c"/></svg>
<div class="cell" style="left:826.9px;top:467.5px;width:83.7px;height:16.1px;border-color:#b8b8b8;"></div>
<div class="a" style="left:826.9px;top:465.5px;width:83.7px;height:21.0px;overflow:hidden"><div class="t serif" style="left:3.5px;top:4.02px;font-size:14.3px;font-weight:normal;white-space:nowrap;line-height:1.120;width:80.2px">Ship Method</div></div>
<div class="a" style="left:913.2px;top:467.5px;width:98.2px;height:19.3px;overflow:hidden"><div class="t serif" style="left:4.1px;top:2.15px;font-size:12.6px;font-weight:bold;white-space:nowrap;line-height:1.120;width:94.1px">[PickSlip.PickSlipShippingDetails]</div></div>
<div class="a" style="left:913.2px;top:484.5px;width:98.2px;height:3.4px;overflow:hidden"><div class="t serif" style="left:4.1px;top:-0.25px;font-size:12.6px;font-weight:bold;white-space:nowrap;line-height:1.120;width:94.1px">[ShippingDetails.Shi</div></div>
<div class="cell" style="left:913.2px;top:467.5px;width:106.7px;height:16.1px;border-color:#b8b8b8;"></div>
<svg style="left:1010.1px;top:467.5px" width="10" height="14.6" viewBox="0 0 10 14.6"><path d="M0 3.500Q5 5.600 10 3.500V13.700Q10 14.600 9.100 14.600H.900Q0 14.600 0 13.700Z" fill="#3c3c3c"/><path d="M.200 1.400Q5 -.900 9.800 1.400Q5 3.700 .200 1.400Z" fill="#3c3c3c"/></svg>
<div class="cell" style="left:826.9px;top:486.8px;width:83.7px;height:16.1px;border-color:#b8b8b8;"></div>
<div class="cell" style="left:913.2px;top:486.8px;width:106.7px;height:16.1px;border-color:#b8b8b8;"></div>
<div class="a" style="left:826.9px;top:484.8px;width:83.7px;height:21.0px;overflow:hidden"><div class="t serif" style="left:3.5px;top:3.22px;font-size:14.3px;font-weight:normal;white-space:nowrap;line-height:1.120;width:80.2px">Order By</div></div>
<div class="a" style="left:913.2px;top:485.8px;width:106.7px;height:20.0px;overflow:hidden"><div class="t serif" style="left:4.1px;top:2.25px;font-size:12.6px;font-weight:bold;white-space:nowrap;line-height:1.120;width:102.6px">[OrderBy]</div></div>
<svg style="left:1010.1px;top:486.8px" width="10" height="14.6" viewBox="0 0 10 14.6"><path d="M0 3.500Q5 5.600 10 3.500V13.700Q10 14.600 9.100 14.600H.900Q0 14.600 0 13.700Z" fill="#3c3c3c"/><path d="M.200 1.400Q5 -.900 9.800 1.400Q5 3.700 .200 1.400Z" fill="#3c3c3c"/></svg>
<div class="cell" style="left:826.9px;top:505.9px;width:83.7px;height:16.1px;border-color:#b8b8b8;"></div>
<div class="cell" style="left:913.2px;top:505.9px;width:106.7px;height:16.1px;border-color:#b8b8b8;"></div>
<div class="a" style="left:826.9px;top:503.9px;width:83.7px;height:21.0px;overflow:hidden"><div class="t serif" style="left:3.5px;top:3.12px;font-size:14.3px;font-weight:normal;white-space:nowrap;line-height:1.120;width:80.2px">Order Date</div></div>
<div class="a" style="left:913.2px;top:504.9px;width:106.7px;height:20.0px;overflow:hidden"><div class="t serif" style="left:4.1px;top:3.55px;font-size:12.6px;font-weight:bold;white-space:nowrap;line-height:1.120;width:102.6px">[OrderDate]</div></div>
<svg style="left:1010.1px;top:505.9px" width="10" height="14.6" viewBox="0 0 10 14.6"><path d="M0 3.500Q5 5.600 10 3.500V13.700Q10 14.600 9.100 14.600H.900Q0 14.600 0 13.700Z" fill="#3c3c3c"/><path d="M.200 1.400Q5 -.900 9.800 1.400Q5 3.700 .200 1.400Z" fill="#3c3c3c"/></svg>
<div class="cell" style="left:826.9px;top:525px;width:83.7px;height:16.1px;border-color:#b8b8b8;"></div>
<div class="cell" style="left:913.2px;top:525px;width:106.7px;height:16.1px;border-color:#b8b8b8;"></div>
<div class="a" style="left:826.9px;top:523px;width:83.7px;height:21.0px;overflow:hidden"><div class="t serif" style="left:3.5px;top:3.22px;font-size:14.3px;font-weight:normal;white-space:nowrap;line-height:1.120;width:80.2px">Release Date</div></div>
<div class="a" style="left:913.2px;top:524px;width:106.7px;height:20.0px;overflow:hidden"><div class="t serif" style="left:4.1px;top:2.85px;font-size:12.6px;font-weight:bold;white-space:nowrap;line-height:1.120;width:102.6px">[ReleaseDate]</div></div>
<svg style="left:1010.1px;top:525px" width="10" height="14.6" viewBox="0 0 10 14.6"><path d="M0 3.500Q5 5.600 10 3.500V13.700Q10 14.600 9.100 14.600H.900Q0 14.600 0 13.700Z" fill="#3c3c3c"/><path d="M.200 1.400Q5 -.900 9.800 1.400Q5 3.700 .200 1.400Z" fill="#3c3c3c"/></svg>
<svg style="left:0;top:0" width="1203" height="725" viewBox="0 0 1203 725">
<g fill="#b59d32"><polygon points="352.47,279.58 353.87,281.10 355.86,280.55 354.85,282.35 355.99,284.08 353.96,283.67 352.67,285.28 352.44,283.23 350.50,282.50 352.38,281.65"/><polygon points="362.60,277.80 363.45,279.84 365.64,280.01 363.97,281.44 364.48,283.59 362.60,282.44 360.72,283.59 361.23,281.44 359.56,280.01 361.75,279.84"/><polygon points="372.23,279.58 372.32,281.65 374.20,282.50 372.26,283.23 372.03,285.28 370.74,283.67 368.71,284.08 369.85,282.35 368.84,280.55 370.83,281.10"/></g>
<path d="M301.3 328.3H423.9Q430.9 328.3 430.9 335.3L430.9 335.2C430.9 339.0 437.0 339.2 437.0 343.2L437.0 352.40000000000003C437.0 356.40000000000003 430.9 356.6 430.9 360.40000000000003L430.9 360.5Q430.9 367.5 423.9 367.5H301.3Q294.3 367.5 294.3 360.5L294.3 360.40000000000003C294.3 356.6 288.2 356.40000000000003 288.2 352.40000000000003L288.2 343.2C288.2 339.2 294.3 339.0 294.3 335.2L294.3 335.3Q294.3 328.3 301.3 328.3Z" fill="none" stroke="#b59d32" stroke-width="1.6" stroke-linejoin="round"/>
<path d="M302.1 331.5H423.09999999999997Q427.85999999999996 331.5 427.85999999999996 336.26L427.85999999999996 336.8C427.85999999999996 340.6 433.64 340.16 433.64 344.16L433.64 351.44C433.64 355.44 427.85999999999996 355.0 427.85999999999996 358.8L427.85999999999996 359.54Q427.85999999999996 364.3 423.09999999999997 364.3H302.1Q297.34000000000003 364.3 297.34000000000003 359.54L297.34000000000003 358.8C297.34000000000003 355.0 291.56 355.44 291.56 351.44L291.56 344.16C291.56 340.16 297.34000000000003 340.6 297.34000000000003 336.8L297.34000000000003 336.26Q297.34000000000003 331.5 302.1 331.5Z" fill="none" stroke="#b59d32" stroke-width="1.2" stroke-linejoin="round"/>
<ellipse cx="362.700" cy="328.300" rx="31.600" ry="7.300" fill="#231f20" stroke="#fff" stroke-width="3.600" paint-order="stroke"/>
<path d="M344.300 312V321.400Q362.600 329.400 381 321.400V312Z" fill="#fff"/>
<path d="M346 291.500A16.500 3.600 0 0 1 379 291.500V315.300Q362.500 322.500 346 315.300Z" fill="#231f20"/>
<path d="M346.800 291.600A15.700 2.700 0 0 0 378.200 291.600" fill="none" stroke="#fff" stroke-width="1.900"/>
<path d="M321.500 301H344.600V314.400H321.500L325.600 307.700Z" fill="#b59d32"/>
<path d="M380.500 301H403.600L399.500 307.700L403.600 314.400H380.500Z" fill="#b59d32"/>
<text x="334.700" y="310.300" font-family="Liberation Serif,serif" font-weight="bold" font-size="9.400" text-anchor="middle" fill="#231f20" stroke="#231f20" stroke-width="0.350" letter-spacing="0.500">est.</text>
<text x="390.500" y="310.500" font-family="Liberation Serif,serif" font-weight="bold" font-size="8" text-anchor="middle" fill="#231f20" stroke="#231f20" stroke-width="0.300" letter-spacing="0.200">1987</text>
<text x="362.600" y="352.500" font-family="Liberation Sans,sans-serif" font-weight="bold" font-size="16.700" text-anchor="middle" fill="#3a3a3a" textLength="105.500" lengthAdjust="spacing">HATS PLACE</text>
<g fill="#231f20"><polygon points="301.18,345.25 302.29,346.99 304.35,346.79 303.04,348.39 303.86,350.28 301.93,349.53 300.38,350.90 300.51,348.83 298.73,347.78 300.73,347.26"/><polygon points="423.42,345.25 423.87,347.26 425.87,347.78 424.09,348.83 424.22,350.90 422.67,349.53 420.74,350.28 421.56,348.39 420.25,346.79 422.31,346.99"/></g>
<text x="362.500" y="379" font-family="Liberation Serif,serif" font-weight="bold" font-size="9.600" text-anchor="middle" fill="#231f20" textLength="74.500" lengthAdjust="spacing">- brilliant choice -</text>
<path d="M355.600 382.300Q354.300 382.300 354.300 383.800V387.600Q354.300 389.200 355.600 389.200H358.400Q360.100 389.200 360.100 387.600V383.900Q360.100 382.300 358.400 382.300Z" fill="#231f20"/>
<path d="M368.600 382.300Q369.900 382.300 369.900 383.800V387.600Q369.900 389.200 368.600 389.200H365.800Q364.100 389.200 364.100 387.600V383.900Q364.100 382.300 365.800 382.300Z" fill="#231f20"/>
<rect x="360.800" y="383.800" width="2.600" height="3.900" rx="0.600" fill="#231f20"/>
</svg>
<div class="a" style="left:0;top:0;width:1203px;height:725px;box-sizing:border-box;border:3px solid #000;pointer-events:none"></div>
</body></html>
